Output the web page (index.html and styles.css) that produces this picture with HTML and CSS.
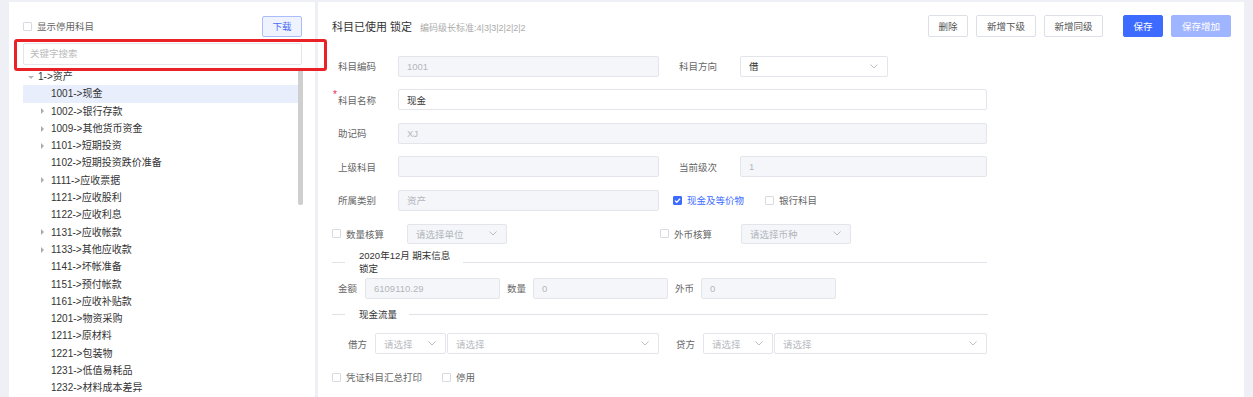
FILE: index.html
```html
<!DOCTYPE html>
<html lang="zh-CN">
  <head>
    <meta charset="UTF-8" />
    <meta name="viewport" content="width=device-width, initial-scale=1.0" />
    <title>科目设置</title>
    <link rel="stylesheet" href="styles.css">
  </head>
  <body>
    <div class="page">
      <aside class="side">
        <div class="side-head">
          <label class="check"><span class="box"></span>显示停用科目</label>
          <button class="btn-download">下载</button>
        </div>
        <div class="search">关键字搜索</div>
        <div class="tree">
          <div class="node lv0"><span class="arrow down"></span>1-&gt;资产</div>
          <div class="node lv1 active"><span class="arrow"></span>1001-&gt;现金</div>
          <div class="node lv1"><span class="arrow right"></span>1002-&gt;银行存款</div>
          <div class="node lv1"><span class="arrow right"></span>1009-&gt;其他货币资金</div>
          <div class="node lv1"><span class="arrow right"></span>1101-&gt;短期投资</div>
          <div class="node lv1"><span class="arrow"></span>1102-&gt;短期投资跌价准备</div>
          <div class="node lv1"><span class="arrow right"></span>1111-&gt;应收票据</div>
          <div class="node lv1"><span class="arrow"></span>1121-&gt;应收股利</div>
          <div class="node lv1"><span class="arrow"></span>1122-&gt;应收利息</div>
          <div class="node lv1"><span class="arrow right"></span>1131-&gt;应收帐款</div>
          <div class="node lv1"><span class="arrow right"></span>1133-&gt;其他应收款</div>
          <div class="node lv1"><span class="arrow"></span>1141-&gt;坏帐准备</div>
          <div class="node lv1"><span class="arrow"></span>1151-&gt;预付帐款</div>
          <div class="node lv1"><span class="arrow"></span>1161-&gt;应收补贴款</div>
          <div class="node lv1"><span class="arrow"></span>1201-&gt;物资采购</div>
          <div class="node lv1"><span class="arrow"></span>1211-&gt;原材料</div>
          <div class="node lv1"><span class="arrow"></span>1221-&gt;包装物</div>
          <div class="node lv1"><span class="arrow"></span>1231-&gt;低值易耗品</div>
          <div class="node lv1"><span class="arrow"></span>1232-&gt;材料成本差异</div>
          <div class="scroll-thumb"></div>
        </div>
      </aside>

      <section class="editor">
        <div class="editor-head">
          <div class="title">科目已使用 锁定<span class="hint">编码级长标准:4|3|3|2|2|2|2</span></div>
          <div class="actions">
            <button class="btn w40">删除</button>
            <button class="btn w60">新增下级</button>
            <button class="btn w59">新增同级</button>
            <button class="btn primary w40 gap-l">保存</button>
            <button class="btn primary-light w60">保存增加</button>
          </div>
        </div>

        <div class="row">
          <span class="lbl">科目编码</span>
          <div class="inp disabled w-half">1001</div>
          <span class="lbl lbl-right">科目方向</span>
          <div class="inp select w-dir">借
            <svg class="chev" viewBox="0 0 8 5" width="8" height="5"><path d="M0.5 0.5 L4 4 L7.5 0.5" /></svg>
          </div>
        </div>

        <div class="row">
          <span class="lbl"><span class="req">*</span>科目名称</span>
          <div class="inp w-full">现金</div>
        </div>

        <div class="row">
          <span class="lbl">助记码</span>
          <div class="inp disabled w-full">XJ</div>
        </div>

        <div class="row">
          <span class="lbl">上级科目</span>
          <div class="inp disabled w-half"></div>
          <span class="lbl lbl-right">当前级次</span>
          <div class="inp disabled w-level">1</div>
        </div>

        <div class="row">
          <span class="lbl">所属类别</span>
          <div class="inp disabled w-half">资产</div>
          <label class="check checked cash"><span class="box"><svg viewBox="0 0 9 9" width="9" height="9"><path d="M2 4.6 L3.8 6.3 L7 2.8" /></svg></span>现金及等价物</label>
          <label class="check bank"><span class="box"></span>银行科目</label>
        </div>

        <div class="row row-check">
          <div class="group g-qty">
            <label class="check"><span class="box"></span>数量核算</label>
            <div class="inp select disabled w100">请选择单位
              <svg class="chev" viewBox="0 0 8 5" width="8" height="5"><path d="M0.5 0.5 L4 4 L7.5 0.5" /></svg>
            </div>
          </div>
          <div class="group">
            <label class="check"><span class="box"></span>外币核算</label>
            <div class="inp select disabled w110">请选择币种
              <svg class="chev" viewBox="0 0 8 5" width="8" height="5"><path d="M0.5 0.5 L4 4 L7.5 0.5" /></svg>
            </div>
          </div>
        </div>

        <div class="divider d-period">
          <span class="line-l"></span>
          <span class="divider-text period">2020年12月 期末信息 锁定</span>
          <span class="line-r"></span>
        </div>

        <div class="row row-amount">
          <span class="lbl-s">金额</span>
          <div class="inp disabled w135">6109110.29</div>
          <span class="lbl-s ml7">数量</span>
          <div class="inp disabled w135">0</div>
          <span class="lbl-s ml7">外币</span>
          <div class="inp disabled w135">0</div>
        </div>

        <div class="divider d-flow">
          <span class="line-l"></span>
          <span class="divider-text">现金流量</span>
          <span class="line-r"></span>
        </div>

        <div class="row row-flow">
          <span class="lbl-s">借方</span>
          <div class="inp select ph w71">请选择
            <svg class="chev" viewBox="0 0 8 5" width="8" height="5"><path d="M0.5 0.5 L4 4 L7.5 0.5" /></svg>
          </div>
          <div class="inp select ph w212">请选择
            <svg class="chev" viewBox="0 0 8 5" width="8" height="5"><path d="M0.5 0.5 L4 4 L7.5 0.5" /></svg>
          </div>
          <span class="lbl-s ml17">贷方</span>
          <div class="inp select ph w70">请选择
            <svg class="chev" viewBox="0 0 8 5" width="8" height="5"><path d="M0.5 0.5 L4 4 L7.5 0.5" /></svg>
          </div>
          <div class="inp select ph w213">请选择
            <svg class="chev" viewBox="0 0 8 5" width="8" height="5"><path d="M0.5 0.5 L4 4 L7.5 0.5" /></svg>
          </div>
        </div>

        <div class="row row-last">
          <label class="check print"><span class="box"></span>凭证科目汇总打印</label>
          <label class="check"><span class="box"></span>停用</label>
        </div>
      </section>
    </div>
    <div class="highlight-mark"></div>
  </body>
</html>
```

FILE: styles.css
```css
* {
  box-sizing: border-box;
}

body {
  margin: 0;
  height: 100vh;
  overflow: hidden;
  background-color: #eef0f5;
  font-family: "Liberation Sans", "Noto Sans CJK SC", sans-serif;
  font-size: 10px;
  color: #555;
  position: relative;
}

.page {
  display: flex;
  gap: 3px;
  padding: 2px 0 0 9px;
  height: 100vh;
}

/* left tree panel */
.side {
  width: 306px;
  background-color: #fff;
  padding: 13px 13px 0 14px;
}

.side-head {
  display: flex;
  justify-content: space-between;
  align-items: center;
  height: 22px;
}

.check {
  display: flex;
  align-items: center;
  gap: 5px;
  font-size: 9.5px;
  color: #666;
  white-space: nowrap;
}

.check .box {
  width: 9px;
  height: 9px;
  border: 1px solid #d7dae0;
  border-radius: 1px;
  background-color: #fff;
  flex: none;
  display: flex;
}

.check.checked {
  color: #3d6bff;
}

.check.checked .box {
  background-color: #3d6bff;
  border-color: #3d6bff;
}

.check.checked svg {
  margin: -1px;
}

.check.checked path {
  fill: none;
  stroke: #fff;
  stroke-width: 1.3;
}

.btn-download {
  width: 40px;
  height: 21px;
  background-color: #eef3ff;
  border: 1px solid #a9bdfb;
  border-radius: 2px;
  color: #4a6cf5;
  font-family: inherit;
  font-size: 9.5px;
  padding: 0;
}

.search {
  margin-top: 6px;
  height: 22px;
  border: 1px solid #e4e6eb;
  border-radius: 2px;
  padding: 0 6px;
  line-height: 20px;
  font-size: 9.5px;
  color: #bbb;
}

.tree {
  position: relative;
  margin-top: 3px;
  margin-right: -1px;
}

.node {
  height: 17.3px;
  line-height: 17.3px;
  width: 275px;
  display: flex;
  align-items: center;
  font-size: 10px;
  color: #333;
  white-space: nowrap;
}

.node.lv0 {
  padding-left: 4px;
}

.node.lv1 {
  padding-left: 17px;
}

.node.active {
  background-color: #e8eefc;
}

.arrow {
  width: 11px;
  height: 10px;
  flex: none;
  position: relative;
}

.arrow.down::after {
  content: "";
  position: absolute;
  left: 1px;
  top: 4px;
  border-left: 3px solid transparent;
  border-right: 3px solid transparent;
  border-top: 3px solid #b5b8be;
}

.arrow.right::after {
  content: "";
  position: absolute;
  left: 1px;
  top: 2px;
  border-top: 3px solid transparent;
  border-bottom: 3px solid transparent;
  border-left: 3px solid #a9acb2;
}

.scroll-thumb {
  position: absolute;
  right: 0;
  top: 0;
  width: 5px;
  height: 137px;
  background-color: #cfcfcf;
  border-radius: 2px;
}

/* right editor panel */
.editor {
  width: 926px;
  background-color: #fff;
  padding: 13px 13px 0 14px;
}

.editor-head {
  display: flex;
  justify-content: space-between;
  align-items: center;
  height: 22px;
  margin-bottom: 18px;
}

.title {
  font-size: 11px;
  color: #333;
}

.hint {
  font-size: 9px;
  color: #aaa;
  margin-left: 8px;
}

.actions {
  display: flex;
  gap: 8px;
}

.btn {
  height: 22px;
  padding: 0;
  background-color: #fff;
  border: 1px solid #dcdfe6;
  border-radius: 2px;
  font-family: inherit;
  font-size: 9.5px;
  color: #555;
}

.btn.primary {
  background-color: #3d6bff;
  border-color: #3d6bff;
  color: #fff;
}

.btn.primary-light {
  background-color: #a0b5ff;
  border-color: #a0b5ff;
  color: #fff;
}

.gap-l {
  margin-left: 12px;
}

.w40 { width: 40px; }
.w59 { width: 59px; }
.w60 { width: 60px; }

.row {
  display: flex;
  align-items: center;
  height: 22px;
  margin-bottom: 11.6px;
}

.lbl {
  width: 66px;
  padding-left: 6px;
  font-size: 9.5px;
  color: #666;
  white-space: nowrap;
  position: relative;
}

.lbl-right {
  width: 61px;
  margin-left: 20px;
  padding-left: 0;
}

.req {
  position: absolute;
  left: 1px;
  top: -4px;
  color: #f0245a;
  font-size: 10px;
}

.inp {
  height: 21px;
  border: 1px solid #e3e5ea;
  border-radius: 2px;
  background-color: #fff;
  padding: 0 8px;
  display: flex;
  align-items: center;
  font-size: 9.5px;
  color: #333;
  white-space: nowrap;
}

.inp.disabled {
  background-color: #f5f6fa;
  color: #b3b6bc;
}

.inp.ph {
  color: #b8bbc1;
}

.select {
  justify-content: space-between;
  padding-right: 9px;
}

.chev {
  flex: none;
}

.chev path {
  fill: none;
  stroke: #b4b8bf;
  stroke-width: 0.9;
}

.w-half { width: 261px; }
.w-full { width: 589px; }
.w-dir { width: 148px; }
.w-level { width: 247px; }
.w100 { width: 100px; height: 20px; }
.w110 { width: 110px; height: 20px; }
.w135 { width: 135px; }
.w71 { width: 71px; }
.w70 { width: 70px; }
.w212 { width: 212px; margin-left: 1px; }
.w213 { width: 213px; margin-left: 1px; }

.cash {
  margin-left: 14px;
}

.bank {
  margin-left: 21px;
}

.row-check {
  margin-bottom: 0;
}

.group {
  display: flex;
  align-items: center;
}

.group .check {
  width: 75px;
}

.g-qty {
  width: 328px;
}

.g-qty + .group .check {
  width: 81px;
}

.divider {
  display: flex;
  align-items: center;
}

.line-l {
  width: 13px;
  border-top: 1px solid #e1e3e8;
}

.line-r {
  border-top: 1px solid #e1e3e8;
}

.divider-text {
  padding: 0 13px 0 14px;
  font-size: 9.5px;
  line-height: 13px;
  color: #333;
}

.divider-text.period {
  width: 118px;
  padding-right: 4px;
}

.d-period {
  margin-top: 4.5px;
}

.d-period .line-r {
  width: 524px;
}

.d-flow {
  margin-top: 9px;
}

.d-flow .divider-text {
  padding-right: 12px;
}

.d-flow .line-r {
  width: 579px;
}

.row-amount {
  margin-top: 2px;
  margin-bottom: 0;
  padding-left: 6px;
}

.lbl-s {
  width: 27px;
  font-size: 9.5px;
  color: #666;
  white-space: nowrap;
}

.ml7 {
  margin-left: 7px;
  width: 26px;
}

.ml17 {
  margin-left: 17px;
}

.row-flow {
  margin-top: 11.5px;
  margin-bottom: 0;
  padding-left: 16px;
}

.row-last {
  margin-top: 16px;
  height: 13px;
}

.print {
  width: 110px;
}

/* annotation box drawn over the search field */
.highlight-mark {
  position: absolute;
  left: 14px;
  top: 39px;
  width: 313px;
  height: 32px;
  border: 3px solid #ea2228;
  border-radius: 3px;
}
```
